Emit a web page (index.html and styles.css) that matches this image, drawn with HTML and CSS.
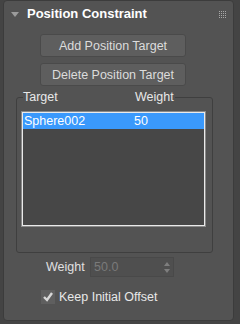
FILE: index.html
```html
<!DOCTYPE html>
<html lang="en">
<head>
    <meta charset="UTF-8">
    <title>Position Constraint</title>
    <link rel="stylesheet" href="styles.css">
</head>
<body>
    <div class="panel">
        <!-- rollout header -->
        <div class="rollout-head">
            <span class="arrow"></span>
            <span class="title">Position Constraint</span>
            <svg class="grip" width="7" height="7" viewBox="0 0 7 7">
                <g fill="#a8a8a8">
                    <rect x="0" y="0" width="1" height="1"/><rect x="2" y="0" width="1" height="1"/><rect x="4" y="0" width="1" height="1"/><rect x="6" y="0" width="1" height="1"/>
                    <rect x="0" y="2" width="1" height="1"/><rect x="2" y="2" width="1" height="1"/><rect x="4" y="2" width="1" height="1"/><rect x="6" y="2" width="1" height="1"/>
                    <rect x="0" y="4" width="1" height="1"/><rect x="2" y="4" width="1" height="1"/><rect x="4" y="4" width="1" height="1"/><rect x="6" y="4" width="1" height="1"/>
                    <rect x="0" y="6" width="1" height="1"/><rect x="2" y="6" width="1" height="1"/><rect x="4" y="6" width="1" height="1"/><rect x="6" y="6" width="1" height="1"/>
                </g>
            </svg>
        </div>

        <div class="buttons">
            <button class="btn">Add Position Target</button>
            <button class="btn">Delete Position Target</button>
        </div>

        <!-- target list -->
        <div class="group">
            <div class="group-labels">
                <span class="col-target">Target</span><span>Weight</span>
            </div>
            <div class="list">
                <div class="list-inner">
                    <div class="row selected">
                        <span class="col-name">Sphere002</span><span>50</span>
                    </div>
                </div>
            </div>
        </div>

        <div class="weight-row">
            <span class="weight-label">Weight</span>
            <div class="spinner">
                <span class="spin-value">50.0</span>
                <svg class="spin-arrows" width="6" height="11" viewBox="0 0 6 11">
                    <path d="M3 0 L6 4 L0 4 Z" fill="#7e7e7e"/>
                    <path d="M0 7 L6 7 L3 11 Z" fill="#7e7e7e"/>
                </svg>
            </div>
        </div>

        <div class="check-row">
            <span class="checkbox">
                <svg width="14" height="14" viewBox="0 0 14 14">
                    <path d="M3 7 L6 10 L11 3" fill="none" stroke="#d8d8d8" stroke-width="2.4"/>
                </svg>
            </span>
            <span>Keep Initial Offset</span>
        </div>
    </div>
</body>
</html>
```

FILE: styles.css
```css
body {
    margin: 0;
    background-color: #444444;
    font-family: "Liberation Sans", Arial, sans-serif;
    font-size: 12.5px;
    color: #dcdcdc;
}
.panel {
    box-sizing: border-box;
    width: 231px;
    height: 321px;
    margin-left: 3px;
    background-color: #535353;
    border: 1px solid #3c3c3c;
    border-radius: 4px;
}
.rollout-head {
    display: flex;
    align-items: center;
    height: 25px;
}
.arrow {
    width: 0;
    height: 0;
    margin-left: 7px;
    margin-top: 1px;
    border-left: 4px solid transparent;
    border-right: 4px solid transparent;
    border-top: 5px solid #9c9c9c;
}
.title {
    margin-left: 8px;
    font-size: 13px;
    font-weight: bold;
    color: #ffffff;
}
.grip {
    margin-left: auto;
    margin-right: 7px;
    margin-top: 1px;
}
.buttons {
    display: flex;
    flex-direction: column;
    gap: 6px;
    padding-top: 8px;
    margin-left: 36px;
}
.btn {
    box-sizing: border-box;
    width: 146px;
    height: 23px;
    padding: 0;
    background-color: #5e5e5e;
    border: 1px solid #4a4a4a;
    border-radius: 3px;
    font-family: inherit;
    font-size: 12.5px;
    color: #dcdcdc;
}
.group {
    box-sizing: border-box;
    width: 197px;
    height: 156px;
    margin: 11px 0 0 12px;
    border: 1px solid #3f3f3f;
    border-radius: 3px;
}
.group-labels {
    display: flex;
    width: 152px;
    height: 14px;
    line-height: 14px;
    margin: -8px 0 0 6px;
    background-color: #535353;
    color: #e8e8e8;
}
.col-target {
    width: 112px;
}
.list {
    box-sizing: border-box;
    width: 185px;
    height: 116px;
    margin: 7px 0 0 4px;
    border: 1px solid #8a8a8a;
}
.list-inner {
    box-sizing: border-box;
    height: 100%;
    background-color: #474747;
    border: 1px solid #eaeaea;
}
.row {
    display: flex;
    height: 16px;
    line-height: 16px;
    padding-left: 1px;
    color: #ffffff;
}
.selected {
    background-color: #3a99fc;
}
.col-name {
    width: 110px;
}
.weight-row {
    display: flex;
    align-items: center;
    margin: 4px 0 0 42px;
}
.weight-label {
    width: 44px;
    color: #e0e0e0;
}
.spinner {
    box-sizing: border-box;
    display: flex;
    align-items: center;
    width: 84px;
    height: 20px;
    padding-left: 3px;
    background-color: #4f4f4f;
    border: 1px solid #494949;
}
.spin-value {
    color: #7a7a7a;
}
.spin-arrows {
    margin-left: auto;
    margin-right: 3px;
}
.check-row {
    display: flex;
    align-items: center;
    gap: 4px;
    margin: 13px 0 0 37px;
    color: #e8e8e8;
}
.checkbox {
    display: flex;
    width: 14px;
    height: 14px;
    background-color: #5f5f5f;
}
```
